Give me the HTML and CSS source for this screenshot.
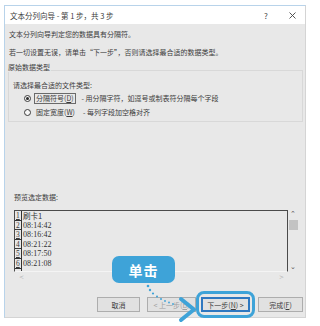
FILE: index.html
```html
<!DOCTYPE html>
<html lang="zh-CN">

<head>
    <meta charset="UTF-8">
    <meta name="viewport" content="width=device-width, initial-scale=1.0">
    <title>文本分列向导</title>
    <link rel="stylesheet" href="styles.css">
</head>

<body>
<div class="window">
    <div class="titlebar">
        <span class="title">文本分列向导 - 第 1 步，共 3 步</span>
        <span class="help">?</span>
        <span class="close">
            <svg width="7" height="7" viewBox="0 0 7 7"><path d="M0.5 0.5L6.5 6.5M6.5 0.5L0.5 6.5" stroke="#444" stroke-width="0.9" fill="none" /></svg>
        </span>
    </div>
    <div class="content">
        <p class="line first">文本分列向导判定您的数据具有分隔符。</p>
        <p class="line second">若一切设置无误，请单击“下一步”，否则请选择最合适的数据类型。</p>
        <div class="group-label">原始数据类型</div>
        <div class="group">
            <p class="line">请选择最合适的文件类型:</p>
            <div class="option">
                <span class="radio checked"></span>
                <span class="opt-name focus">分隔符号(<u>D</u>)</span>
                <span class="opt-desc">- 用分隔字符，如逗号或制表符分隔每个字段</span>
            </div>
            <div class="option">
                <span class="radio"></span>
                <span class="opt-name">固定宽度(<u>W</u>)</span>
                <span class="opt-desc">- 每列字段加空格对齐</span>
            </div>
        </div>
        <p class="line preview-label">预览选定数据:</p>
        <div class="preview">
            <div class="preview-main">
                <div class="nums">
                    <span>1</span>
                    <span>2</span>
                    <span>3</span>
                    <span>4</span>
                    <span>5</span>
                    <span>6</span>
                    <span></span>
                </div>
                <div class="rows">
                    <span class="cjk">刷卡1</span>
                    <span>08:14:42</span>
                    <span>08:16:42</span>
                    <span>08:21:22</span>
                    <span>08:17:50</span>
                    <span>08:21:08</span>
                </div>
            </div>
            <div class="vscroll">
                <span class="arrow">&#8963;</span>
                <span class="thumb"></span>
                <span class="arrow down">&#8964;</span>
            </div>
        </div>
        <div class="hscroll">
            <span>&lt;</span>
            <span>&gt;</span>
        </div>
        <div class="buttons">
            <span class="btn cancel">取消</span>
            <span class="btn back">&lt; 上一步(<u>B</u>)</span>
            <span class="btn next">下一步(<u>N</u>) &gt;</span>
            <span class="btn finish">完成(<u>F</u>)</span>
        </div>
    </div>
</div>

<!-- tutorial overlay -->
<div class="bubble">单击</div>
<div class="ring"></div>
<svg class="pointer" width="60" height="45" viewBox="140 280 60 45">
    <g fill="#3ea3d8">
        <circle cx="148" cy="286" r="1.3" />
        <circle cx="150" cy="290" r="1.2" />
        <circle cx="153" cy="293.5" r="1.1" />
        <circle cx="157" cy="296.5" r="1" />
        <circle cx="161" cy="299" r="1" />
        <circle cx="165" cy="301" r="0.9" />
        <circle cx="169" cy="302.5" r="0.9" />
        <circle cx="173" cy="304" r="0.9" />
    </g>
    <path d="M181 299L194 309.5L181 320" stroke="#3ea3d8" stroke-width="4" stroke-linecap="round" stroke-linejoin="round" fill="none" />
</svg>
</body>

</html>
```

FILE: styles.css
```css
* {
    box-sizing: border-box;
}

html,
body {
    margin: 0;
    padding: 0;
}

body {
    position: relative;
    width: 320px;
    height: 326px;
    overflow: hidden;
    background: #fff;
    font-family: "Noto Sans CJK SC", "Noto Sans", sans-serif;
    font-size: 7px;
    color: #3c3c3c;
}

.window {
    margin: 5px 0 0 4px;
    width: 302px;
    height: 313px;
    display: flex;
    flex-direction: column;
    border: 1px solid #d4d4d4;
    border-top-color: #b8d3ea;
    border-left-color: #b8d3ea;
}

.titlebar {
    height: 18px;
    display: flex;
    align-items: center;
    padding: 0 8px 0 5px;
    background: #fff;
    font-size: 7.5px;
}

.title {
    flex: 1;
    white-space: nowrap;
}

.help {
    width: 10px;
    text-align: center;
    font-size: 8px;
    color: #444;
}

.close {
    width: 10px;
    margin-left: 16px;
    display: flex;
    justify-content: center;
}

.content {
    flex: 1;
    background: #e8e8e8;
    padding: 4px 2px 5px 4px;
}

.line {
    margin: 0;
    height: 12px;
    line-height: 12px;
    white-space: nowrap;
}

.second {
    margin-top: 6px;
}

.group-label {
    position: relative;
    z-index: 1;
    margin-top: 4px;
    margin-left: -1px;
    width: max-content;
    height: 10px;
    line-height: 10px;
    padding-right: 1px;
    background: #e8e8e8;
}

.group {
    margin: -2px 0 0 -1px;
    height: 52px;
    padding: 8px 0 2px 4px;
    border: 1px solid #d8d8d8;
}

.option {
    height: 14px;
    display: flex;
    align-items: center;
    padding-left: 11px;
    white-space: nowrap;
}

.radio {
    width: 7px;
    height: 7px;
    border-radius: 50%;
    border: 1px solid #3a3a3a;
    background: #f6f6f6;
    display: flex;
    align-items: center;
    justify-content: center;
}

.radio.checked::after {
    content: "";
    width: 3px;
    height: 3px;
    border-radius: 50%;
    background: #2a2a2a;
}

.opt-name {
    margin-left: 3px;
    padding: 0 1px;
    height: 11px;
    line-height: 9px;
    border: 1px solid transparent;
}

.opt-name.focus {
    border-color: #6a6a6a;
}

.opt-desc {
    margin-left: 6px;
}

.preview-label {
    margin-top: 69px;
    padding-left: 5px;
}

.preview {
    margin: 7px 0 0 5px;
    display: flex;
    height: 62px;
}

.preview-main {
    width: 274px;
    display: flex;
    border: 1px solid #4a4a4a;
    border-bottom-color: #f4f4f4;
    overflow: hidden;
}

.nums {
    width: 7px;
    display: flex;
    flex-direction: column;
    border-right: 1px solid #333;
    font-family: "Liberation Serif", serif;
    font-size: 7.5px;
}

.nums span {
    height: 9.6px;
    line-height: 9px;
    flex-shrink: 0;
    border-bottom: 1px solid #333;
    text-decoration: underline;
    padding-left: 1px;
}

.rows {
    display: flex;
    flex-direction: column;
    padding-left: 1px;
    font-family: "Liberation Serif", serif;
    font-size: 8px;
    color: #333;
}

.rows span {
    height: 9.6px;
    line-height: 9.6px;
}

.rows .cjk {
    font-family: "Noto Sans CJK SC", sans-serif;
    font-size: 7.5px;
}

.vscroll {
    width: 10px;
    display: flex;
    flex-direction: column;
    align-items: center;
    color: #555;
    font-family: "DejaVu Sans", sans-serif;
    font-size: 7px;
}

.arrow {
    height: 7px;
    line-height: 9px;
}

.arrow.down {
    margin-top: auto;
    line-height: 5px;
}

.thumb {
    margin-top: 3px;
    width: 9px;
    height: 10px;
    background: #c3c3c3;
}

.hscroll {
    margin-left: 5px;
    width: 274px;
    height: 9px;
    display: flex;
    justify-content: space-between;
    align-items: center;
    padding: 0 4px 0 5px;
    color: #b0b0b0;
    font-family: "DejaVu Sans", sans-serif;
    font-size: 6px;
}

.buttons {
    margin-top: 16px;
    display: flex;
    justify-content: flex-end;
}

.btn {
    height: 15px;
    display: flex;
    align-items: center;
    justify-content: center;
    background: #e1e1e1;
    border: 1px solid #adadad;
    white-space: nowrap;
}

.cancel {
    width: 43px;
}

.back {
    width: 49px;
    margin-left: 7px;
    color: #a0a0a0;
}

.next {
    width: 49px;
    margin-left: 5px;
    border-color: #2f78c0;
    box-shadow: inset 0 0 0 1px #2f78c0;
}

.finish {
    width: 45px;
    margin-left: 8px;
}

.bubble {
    position: absolute;
    left: 112px;
    top: 256px;
    width: 63px;
    height: 27px;
    display: flex;
    align-items: center;
    justify-content: center;
    border-radius: 7px;
    background: #3ea3d8;
    color: #fff;
    font-size: 14px;
    font-weight: bold;
    letter-spacing: 1px;
}

.ring {
    position: absolute;
    left: 196px;
    top: 291px;
    width: 59px;
    height: 27px;
    border: 3px solid #3ea3d8;
    border-radius: 8px;
}

.pointer {
    position: absolute;
    left: 140px;
    top: 280px;
}
```
